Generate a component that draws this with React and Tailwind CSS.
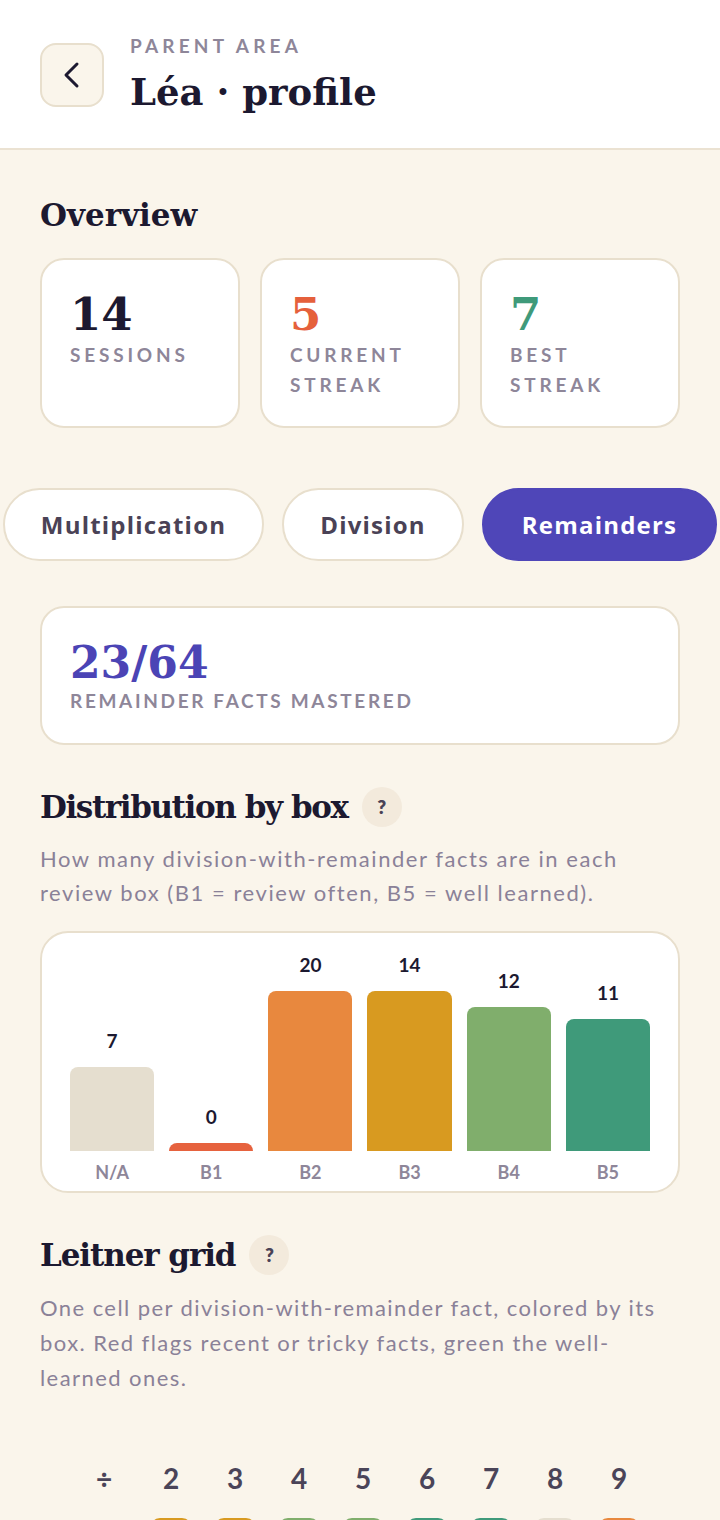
import { useState } from 'react';

const SERIF = { fontFamily: '"DejaVu Serif", "Liberation Serif", serif' };

const boxColor = {
    na: '#e5decf',
    b1: '#e6623e',
    b2: '#e8883e',
    b3: '#d89a20',
    b4: '#80ae6c',
    b5: '#3f9a7a',
};

const stats = [
    { value: '14', label: ['SESSIONS'], color: 'text-[#1c1930]' },
    { value: '5', label: ['CURRENT', 'STREAK'], color: 'text-[#e5603c]' },
    { value: '7', label: ['BEST', 'STREAK'], color: 'text-[#3f9a7a]' },
];

const bars = [
    { key: 'na', label: 'N/A', count: 7, h: 84 },
    { key: 'b1', label: 'B1', count: 0, h: 8 },
    { key: 'b2', label: 'B2', count: 20, h: 160 },
    { key: 'b3', label: 'B3', count: 14, h: 160 },
    { key: 'b4', label: 'B4', count: 12, h: 144 },
    { key: 'b5', label: 'B5', count: 11, h: 132 },
];

const gridRows = [
    { n: 10, cells: ['b3', 'b3', 'b4', 'b4', 'b5', 'b5', 'na', 'b2'] },
    { n: 11, cells: ['b4', 'b3', 'b5', 'b4', 'b5', 'na', 'b2', 'b3'] },
    { n: 12, cells: ['b5', 'b4', 'b3', 'b5', 'b4', 'b2', 'na', 'b5'] },
];

function HelpBadge() {
    return (
        <span className="w-10 h-10 rounded-full bg-[#f3eadc] flex items-center justify-center text-[19px] font-extrabold text-[#4a4256]">
            ?
        </span>
    );
}

function SectionTitle({ children, help, tight = '' }) {
    return (
        <div className="flex items-center gap-[14px]">
            <h2 className={`text-[31px] leading-[37px] font-bold text-[#1c1930] ${tight}`} style={SERIF}>
                {children}
            </h2>
            {help && <HelpBadge />}
        </div>
    );
}

export default function App() {
    const [tab, setTab] = useState('Remainders');
    return (
        <div className="min-h-screen bg-[#faf5eb] font-['Lato','Noto_Sans',sans-serif]">
            <header className="bg-white border-b-2 border-[#ebe2d2] px-10 pt-[35px] pb-[34px] flex items-center gap-[26px]">
                <button className="w-16 h-16 rounded-2xl bg-[#faf5eb] border-2 border-[#e8dfcd] flex items-center justify-center">
                    <svg width="20" height="28" viewBox="0 0 20 28" fill="none">
                        <polyline points="15,3 4,14 15,25" stroke="#1c1930" strokeWidth="3" strokeLinecap="round" strokeLinejoin="round" />
                    </svg>
                </button>
                <div className="flex flex-col">
                    <span className="text-[19px] leading-[22px] font-bold tracking-[0.22em] text-[#8e8699]">PARENT AREA</span>
                    <h1 className="text-[37px] leading-[44px] font-bold text-[#1c1930] mt-[13px]" style={SERIF}>
                        Léa · profile
                    </h1>
                </div>
            </header>

            <main className="px-10 pt-[47px] pb-10">
                <div className="mb-[24px]">
                    <SectionTitle>Overview</SectionTitle>
                </div>
                <div className="grid grid-cols-3 gap-5">
                    {stats.map(s => (
                        <div key={s.value} className="h-[170px] bg-white rounded-3xl border-2 border-[#e8dfcd] pl-[28px] pt-[32px]">
                            <div className={`text-[45px] leading-none font-bold ${s.color}`} style={SERIF}>{s.value}</div>
                            <div className="mt-[3px] text-[19px] leading-[30px] font-bold tracking-[0.2em] text-[#8e8699]">
                                {s.label.map(l => <div key={l}>{l}</div>)}
                            </div>
                        </div>
                    ))}
                </div>

                <div className="-mx-10 mt-[60px] flex justify-center gap-[18px] overflow-hidden font-['Open_Sans',sans-serif]">
                    {['Multiplication', 'Division', 'Remainders'].map(t => (
                        <button key={t} onClick={() => setTab(t)}
                            className={t === tab
                                ? 'shrink-0 h-[73px] px-[38px] rounded-full bg-[#4f46b8] border-2 border-[#4f46b8] text-white text-[24px] font-bold tracking-[0.05em]'
                                : 'shrink-0 h-[73px] px-[36px] rounded-full bg-white border-2 border-[#e8dfcd] text-[#4a4256] text-[24px] font-bold tracking-[0.05em]'}>
                            {t}
                        </button>
                    ))}
                </div>

                <div className="mt-[45px] bg-white rounded-3xl border-2 border-[#e8dfcd] pl-[28px] pt-[33px] pb-[29px]">
                    <div className="text-[44px] leading-none font-bold text-[#4b44b5]" style={SERIF}>23/64</div>
                    <div className="mt-[3px] text-[19px] leading-[26px] font-bold tracking-[0.14em] text-[#8e8699]">
                        REMAINDER FACTS MASTERED
                    </div>
                </div>

                <div className="mt-[42px]">
                    <SectionTitle help tight="tracking-[-0.045em]">Distribution by box</SectionTitle>
                </div>
                <p className="mt-[15px] text-[22px] leading-[34px] tracking-[0.07em] text-[#8a8198]">
                    How many division-with-remainder facts are in each review box (B1 = review often, B5 = well learned).
                </p>

                <div className="mt-[21px] bg-white rounded-[28px] border-2 border-[#e8dfcd] px-[28px] pt-[18px] pb-[8px]">
                    <div className="grid grid-cols-6 gap-[15px] h-[200px] items-end">
                        {bars.map(b => (
                            <div key={b.key} className="flex flex-col items-center">
                                <span className="text-[19px] leading-[22px] font-bold text-[#1c1930] mb-[15px]">{b.count}</span>
                                <div className="w-full rounded-t-lg" style={{ height: b.h, background: boxColor[b.key] }} />
                            </div>
                        ))}
                    </div>
                    <div className="grid grid-cols-6 gap-[15px] mt-[10px]">
                        {bars.map(b => (
                            <span key={b.key} className="text-center text-[18px] leading-[22px] font-bold text-[#8e8699]">{b.label}</span>
                        ))}
                    </div>
                </div>

                <div className="mt-[42px]">
                    <SectionTitle help tight="tracking-[-0.035em]">Leitner grid</SectionTitle>
                </div>
                <p className="mt-[15px] text-[22px] leading-[35px] tracking-[0.065em] text-[#8a8198]">
                    One cell per division-with-remainder fact, colored by its box. Red flags recent or tricky facts, green the well-learned ones.
                </p>

                <div className="mt-[68px] flex flex-col items-center gap-[25px]">
                    <div className="flex gap-[22px] text-[28px] leading-[30px] font-bold text-[#4a4458]">
                        <span className="w-12 text-center">÷</span>
                        {[2, 3, 4, 5, 6, 7, 8, 9].map(n => (
                            <span key={n} className="w-[42px] text-center">{n}</span>
                        ))}
                    </div>
                    {gridRows.map(r => (
                        <div key={r.n} className="flex gap-[22px] items-center">
                            <span className="w-12 text-center text-[24px] leading-[30px] font-bold text-[#4a4458]">{r.n}</span>
                            {r.cells.map((c, i) => (
                                <span key={i} className="w-[42px] h-[42px] rounded-[10px]" style={{ background: boxColor[c] }} />
                            ))}
                        </div>
                    ))}
                </div>
            </main>
        </div>
    );
}
